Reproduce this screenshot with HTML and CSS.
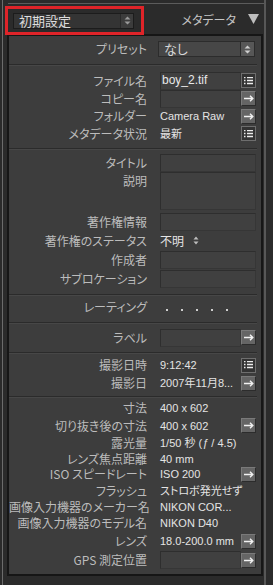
FILE: index.html
```html
<!DOCTYPE html>
<html lang="ja">
<head>
    <meta charset="UTF-8">
    <title>メタデータ</title>
    <link rel="stylesheet" href="styles.css">
</head>
<body>
    <div class="app">
        <div class="prev-edge"></div>

        <!-- header: preset menu + panel title -->
        <div class="header">
            <div class="callout">
                <div class="select select-dark">
                    <span class="select-text">初期設定</span>
                    <span class="select-arrows">
                        <svg width="7" height="9" viewBox="0 0 7 9"><path d="M3.5 0.5L6.5 3.5H0.5Z M3.5 8.5L6.5 5.5H0.5Z" fill="#9a9a9a"/></svg>
                    </span>
                </div>
            </div>
            <div class="panel-title">
                <span>メタデータ</span>
                <svg class="tri" width="11" height="10" viewBox="0 0 11 10"><path d="M0 0H11L5.5 10Z" fill="#bdbdbd"/></svg>
            </div>
        </div>

        <div class="panel">
            <div class="section s-preset">
                <div class="row h16">
                    <span class="label">プリセット</span>
                    <div class="value">
                        <div class="select select-preset">
                            <span class="select-text">なし</span>
                            <span class="select-arrows">
                                <svg width="7" height="9" viewBox="0 0 7 9"><path d="M3.5 0.5L6.5 3.5H0.5Z M3.5 8.5L6.5 5.5H0.5Z" fill="#cfcfcf"/></svg>
                            </span>
                        </div>
                    </div>
                </div>
            </div>

            <div class="section s-file">
                <div class="row h19">
                    <span class="label">ファイル名</span>
                    <div class="value">
                        <div class="box box-text">boy_2.tif</div>
                        <span class="btn btn-list"><svg width="9" height="8" viewBox="0 0 9 8"><path d="M0 0.5h1.5M3 0.5h6M0 3.5h1.5M3 3.5h6M0 6.5h1.5M3 6.5h6" stroke="#ececec" stroke-width="1.4"/></svg></span>
                    </div>
                </div>
                <div class="row h17">
                    <span class="label">コピー名</span>
                    <div class="value">
                        <div class="box"></div>
                        <span class="btn btn-go"><svg width="10" height="7" viewBox="0 0 10 7"><path d="M0 3.5h8M6 0.8l2.8 2.7L6 6.2" stroke="#f2f2f2" stroke-width="1.4" fill="none"/></svg></span>
                    </div>
                </div>
                <div class="row h18">
                    <span class="label">フォルダー</span>
                    <div class="value">
                        <span class="text">Camera Raw</span>
                        <span class="btn btn-go"><svg width="10" height="7" viewBox="0 0 10 7"><path d="M0 3.5h8M6 0.8l2.8 2.7L6 6.2" stroke="#f2f2f2" stroke-width="1.4" fill="none"/></svg></span>
                    </div>
                </div>
                <div class="row h17">
                    <span class="label">メタデータ状況</span>
                    <div class="value">
                        <span class="text">最新</span>
                        <span class="btn btn-list"><svg width="9" height="8" viewBox="0 0 9 8"><path d="M0 0.5h1.5M3 0.5h6M0 3.5h1.5M3 3.5h6M0 6.5h1.5M3 6.5h6" stroke="#ececec" stroke-width="1.4"/></svg></span>
                    </div>
                </div>
            </div>

            <div class="section s-iptc">
                <div class="row h19">
                    <span class="label">タイトル</span>
                    <div class="value"><div class="box box-full"></div></div>
                </div>
                <div class="row row-tall">
                    <span class="label">説明</span>
                    <div class="value"><div class="box box-full box-tall"></div></div>
                </div>
                <div class="row h19">
                    <span class="label">著作権情報</span>
                    <div class="value"><div class="box box-full"></div></div>
                </div>
                <div class="row h19">
                    <span class="label">著作権のステータス</span>
                    <div class="value">
                        <span class="text text-status">不明</span>
                        <svg class="mini-arrows" width="6" height="9" viewBox="0 0 6 9"><path d="M3 0.5L5.5 3.5H0.5Z M3 8.5L5.5 5.5H0.5Z" fill="#bdbdbd"/></svg>
                    </div>
                </div>
                <div class="row h19">
                    <span class="label">作成者</span>
                    <div class="value"><div class="box box-full"></div></div>
                </div>
                <div class="row h19">
                    <span class="label">サブロケーション</span>
                    <div class="value"><div class="box box-full"></div></div>
                </div>
            </div>

            <div class="section s-rating">
                <div class="row h20">
                    <span class="label">レーティング</span>
                    <div class="value rating">
                        <i class="dot"></i><i class="dot"></i><i class="dot"></i><i class="dot"></i><i class="dot"></i>
                    </div>
                </div>
            </div>

            <div class="section s-label">
                <div class="row h19">
                    <span class="label">ラベル</span>
                    <div class="value">
                        <div class="box"></div>
                        <span class="btn btn-go"><svg width="10" height="7" viewBox="0 0 10 7"><path d="M0 3.5h8M6 0.8l2.8 2.7L6 6.2" stroke="#f2f2f2" stroke-width="1.4" fill="none"/></svg></span>
                    </div>
                </div>
            </div>

            <div class="section s-date">
                <div class="row h18">
                    <span class="label">撮影日時</span>
                    <div class="value">
                        <span class="text">9:12:42</span>
                        <span class="btn btn-list"><svg width="9" height="8" viewBox="0 0 9 8"><path d="M0 0.5h1.5M3 0.5h6M0 3.5h1.5M3 3.5h6M0 6.5h1.5M3 6.5h6" stroke="#ececec" stroke-width="1.4"/></svg></span>
                    </div>
                </div>
                <div class="row h18">
                    <span class="label">撮影日</span>
                    <div class="value">
                        <span class="text">2007年11月8...</span>
                        <span class="btn btn-go"><svg width="10" height="7" viewBox="0 0 10 7"><path d="M0 3.5h8M6 0.8l2.8 2.7L6 6.2" stroke="#f2f2f2" stroke-width="1.4" fill="none"/></svg></span>
                    </div>
                </div>
            </div>

            <div class="section s-exif">
                <div class="row h18">
                    <span class="label">寸法</span>
                    <div class="value"><span class="text">400 x 602</span></div>
                </div>
                <div class="row h17">
                    <span class="label">切り抜き後の寸法</span>
                    <div class="value">
                        <span class="text">400 x 602</span>
                        <span class="btn btn-go"><svg width="10" height="7" viewBox="0 0 10 7"><path d="M0 3.5h8M6 0.8l2.8 2.7L6 6.2" stroke="#f2f2f2" stroke-width="1.4" fill="none"/></svg></span>
                    </div>
                </div>
                <div class="row h17">
                    <span class="label">露光量</span>
                    <div class="value"><span class="text">1/50 秒 (<i>ƒ</i> / 4.5)</span></div>
                </div>
                <div class="row h15">
                    <span class="label">レンズ焦点距離</span>
                    <div class="value"><span class="text">40 mm</span></div>
                </div>
                <div class="row h16">
                    <span class="label">ISO スピードレート</span>
                    <div class="value">
                        <span class="text">ISO 200</span>
                        <span class="btn btn-go"><svg width="10" height="7" viewBox="0 0 10 7"><path d="M0 3.5h8M6 0.8l2.8 2.7L6 6.2" stroke="#f2f2f2" stroke-width="1.4" fill="none"/></svg></span>
                    </div>
                </div>
                <div class="row h17">
                    <span class="label">フラッシュ</span>
                    <div class="value"><span class="text">ストロボ発光せず</span></div>
                </div>
                <div class="row h16">
                    <span class="label">画像入力機器のメーカー名</span>
                    <div class="value"><span class="text">NIKON COR...</span></div>
                </div>
                <div class="row h16">
                    <span class="label">画像入力機器のモデル名</span>
                    <div class="value"><span class="text">NIKON D40</span></div>
                </div>
                <div class="row h20">
                    <span class="label">レンズ</span>
                    <div class="value">
                        <span class="text">18.0-200.0 mm</span>
                        <span class="btn btn-go"><svg width="10" height="7" viewBox="0 0 10 7"><path d="M0 3.5h8M6 0.8l2.8 2.7L6 6.2" stroke="#f2f2f2" stroke-width="1.4" fill="none"/></svg></span>
                    </div>
                </div>
                <div class="row h18">
                    <span class="label">GPS 測定位置</span>
                    <div class="value">
                        <div class="box"></div>
                        <span class="btn btn-go"><svg width="10" height="7" viewBox="0 0 10 7"><path d="M0 3.5h8M6 0.8l2.8 2.7L6 6.2" stroke="#f2f2f2" stroke-width="1.4" fill="none"/></svg></span>
                    </div>
                </div>
            </div>
        </div>
    </div>
</body>
</html>
```

FILE: styles.css
```css
/* Lightroom style metadata panel */
* {
    box-sizing: border-box;
}

body {
    margin: 0;
    padding-left: 2px;
    background-color: #2b2b2b;
    font-family: "Liberation Sans", "Noto Sans CJK JP", sans-serif;
    font-size: 12px;
    color: #e2e2e2;
}

.app {
    width: 264px;
    height: 585px;
    border-left: 1px solid #6c6c6c;
    border-right: 2px solid #575757;
}

.prev-edge {
    height: 4px;
    margin-left: 5px;
    border-bottom: 1px solid #5c5c5c;
}

/* header */
.header {
    display: flex;
    align-items: center;
    height: 30px;
}

.callout {
    margin: 1px 0 -1px 2px;
    width: 139px;
    height: 29px;
    border: 3px solid #df2429;
    padding: 4px 7px 0 5px;
    position: relative;
    z-index: 1;
}

.select {
    display: flex;
    align-items: stretch;
    height: 16px;
    border: 1px solid #1c1c1c;
}

.select-text {
    flex: 1;
    padding-left: 5px;
    line-height: 14px;
    font-size: 13px;
    font-family: "Noto Sans CJK JP", sans-serif;
    font-feature-settings: "palt" 1;
}

.select-arrows {
    width: 13px;
    display: flex;
    align-items: center;
    justify-content: center;
    border-left: 1px solid #2a2a2a;
}

.select-dark {
    background-color: #343434;
    color: #dcdcdc;
}

.select-dark .select-arrows {
    background-color: #3c3c3c;
}

.select-preset {
    width: 97px;
    margin-left: -2px;
    background-color: #474747;
    border-color: #2c2c2c;
    color: #d6d6d6;
}

.select-preset .select-arrows {
    width: 14px;
    background-color: #575757;
}

.panel-title {
    flex: 1;
    display: flex;
    align-items: center;
    justify-content: flex-end;
    padding-right: 5px;
    font-family: "Noto Sans CJK JP", sans-serif;
    font-feature-settings: "palt" 1;
    color: #c4c4c4;
}

.tri {
    margin-left: 12px;
}

/* panel */
.panel {
    margin-left: 4px;
    width: 256px;
    height: 542px;
    background-color: #3d3d3d;
    border: 2px solid #161616;
    padding: 0 4px 0 0;
}

.section + .section {
    border-top: 1px solid #2b2b2b;
    box-shadow: inset 0 1px 0 #474747;
}

.s-preset { padding: 5px 0 7px; }
.s-file { padding: 6px 0 6px; }
.s-iptc { padding: 4px 0 6px; }
.s-rating { padding: 2px 0 5px; }
.s-label { padding: 5px 0 5px; }
.s-date { padding: 3px 0 4px; }
.s-exif { padding: 2px 0 5px; }

.row {
    display: flex;
    align-items: center;
}

.h15 { height: 15px; }
.h16 { height: 16px; }
.h17 { height: 17px; }
.h18 { height: 18px; }
.h19 { height: 19px; }
.h20 { height: 20px; }

.row-tall {
    height: 40px;
    align-items: flex-start;
}

.row-tall .label {
    padding-top: 2px;
}

.label {
    width: 138px;
    flex: none;
    text-align: right;
    white-space: nowrap;
    font-family: "Noto Sans CJK JP", sans-serif;
    font-feature-settings: "palt" 1;
    color: #bcbcbc;
    line-height: 14px;
}

.value {
    margin-left: 13px;
    width: 96px;
    display: flex;
    align-items: center;
    font-size: 11px;
}

.text {
    flex: 1;
    white-space: nowrap;
    line-height: 14px;
    color: #e4e4e4;
    font-feature-settings: "palt" 1;
}

.text i {
    font-style: italic;
}

.text-status {
    flex: none;
    font-size: 12px;
    font-family: "Noto Sans CJK JP", sans-serif;
}

.mini-arrows {
    margin-left: 9px;
}

.box {
    flex: 1;
    height: 18px;
    background-color: #404040;
    border: 1px solid #2e2e2e;
    border-right-color: #363636;
    border-bottom-color: #363636;
}

.box-text {
    padding-left: 1px;
    line-height: 15px;
    font-size: 12px;
    color: #e8e8e8;
}

.box-full {
    flex: none;
    width: 96px;
}

.box-tall {
    height: 38px;
}

.btn {
    flex: none;
    width: 15px;
    height: 15px;
    display: flex;
    align-items: center;
    justify-content: center;
}

.btn-go {
    background-color: #656565;
    border: 1px solid #2c2c2c;
    border-top-color: #7a7a7a;
    border-left-color: #7a7a7a;
}

.btn-list {
    background-color: #333333;
    border: 1px solid #6e6e6e;
}

.rating {
    padding-left: 6px;
    gap: 13px;
}

.dot {
    width: 2px;
    height: 2px;
    margin-top: 5px;
    background-color: #cfcfcf;
}
```
